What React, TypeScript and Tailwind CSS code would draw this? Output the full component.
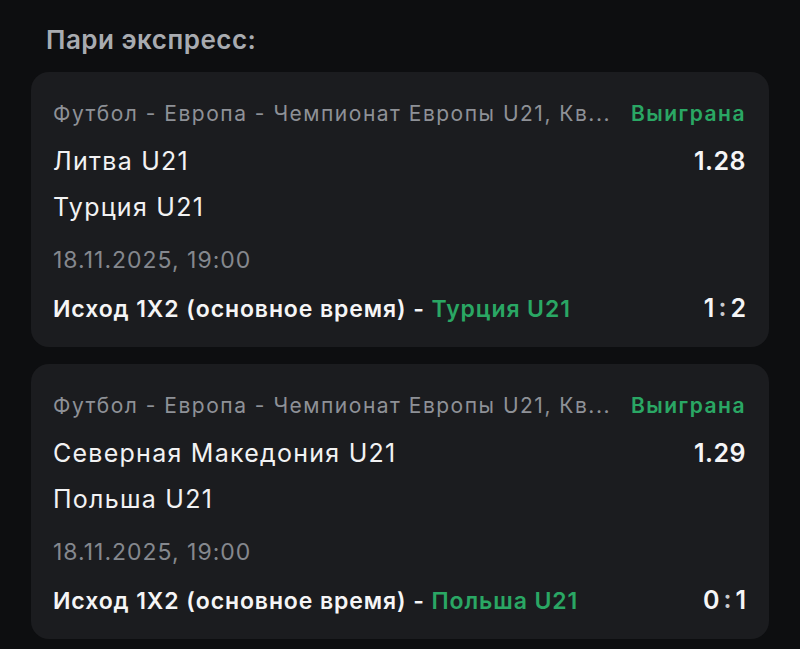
import React from "react";

type Leg = {
  category: string;
  home: string;
  away: string;
  odds: string;
  date: string;
  market: string;
  pick: string;
  score: [string, string];
};

const legs: Leg[] = [
  {
    category: "Футбол - Европа - Чемпионат Европы U21, Кв...",
    home: "Литва U21",
    away: "Турция U21",
    odds: "1.28",
    date: "18.11.2025, 19:00",
    market: "Исход 1X2 (основное время)",
    pick: "Турция U21",
    score: ["1", "2"],
  },
  {
    category: "Футбол - Европа - Чемпионат Европы U21, Кв...",
    home: "Северная Македония U21",
    away: "Польша U21",
    odds: "1.29",
    date: "18.11.2025, 19:00",
    market: "Исход 1X2 (основное время)",
    pick: "Польша U21",
    score: ["0", "1"],
  },
];

function LegCard({ leg }: { leg: Leg }) {
  return (
    <div className="rounded-[18px] bg-[#1b1c1f] pl-[22px] pr-[23px] pt-[26px] pb-[22px]">
      <div className="flex h-8 items-center justify-between gap-2">
        <span className="whitespace-nowrap text-[21px] tracking-[1.5px] text-[#8e9197]">{leg.category}</span>
        <span className="shrink-0 text-[21px] font-semibold tracking-[1.5px] text-[#2aa764]">Выиграна</span>
      </div>

      <div className="mt-[14px] flex h-9 items-center justify-between">
        <span className="text-[25px] tracking-[1.25px] text-[#f2f2f3]">{leg.home}</span>
        <span className="text-[25px] font-semibold tracking-[0.5px] text-[#f5f5f6]">{leg.odds}</span>
      </div>
      <div className="mt-[10px] flex h-9 items-center">
        <span className="text-[25px] tracking-[1.25px] text-[#f2f2f3]">{leg.away}</span>
      </div>

      <div className="mt-[18px] flex h-8 items-center text-[23px] tracking-[1px] text-[#85888e]">{leg.date}</div>

      <div className="mt-[17px] flex h-8 items-center justify-between">
        <span className="text-[23px] font-semibold tracking-[0.9px] text-[#f5f5f6]">
          {leg.market} - <span className="text-[#2aa764]">{leg.pick}</span>
        </span>
        <span className="flex items-center text-[25px] font-semibold text-[#f5f5f6]">
          {leg.score[0]}
          <span className="mx-[4px] -mt-0.5 text-[#c9cacd]">:</span>
          {leg.score[1]}
        </span>
      </div>
    </div>
  );
}

export default function App() {
  return (
    <div
      className="min-h-screen bg-[#0d0e10] px-[31px] pt-[25px]"
      style={{ fontFamily: "Inter, 'Noto Sans', sans-serif" }}
    >
      <h2 className="mb-[17px] pl-[15px] text-[26px] font-semibold leading-[30px] tracking-[0.5px] text-[#a8abb0]">
        Пари экспресс:
      </h2>
      <div className="flex flex-col gap-[17px]">
        {legs.map((leg, i) => (
          <LegCard key={i} leg={leg} />
        ))}
      </div>
    </div>
  );
}
